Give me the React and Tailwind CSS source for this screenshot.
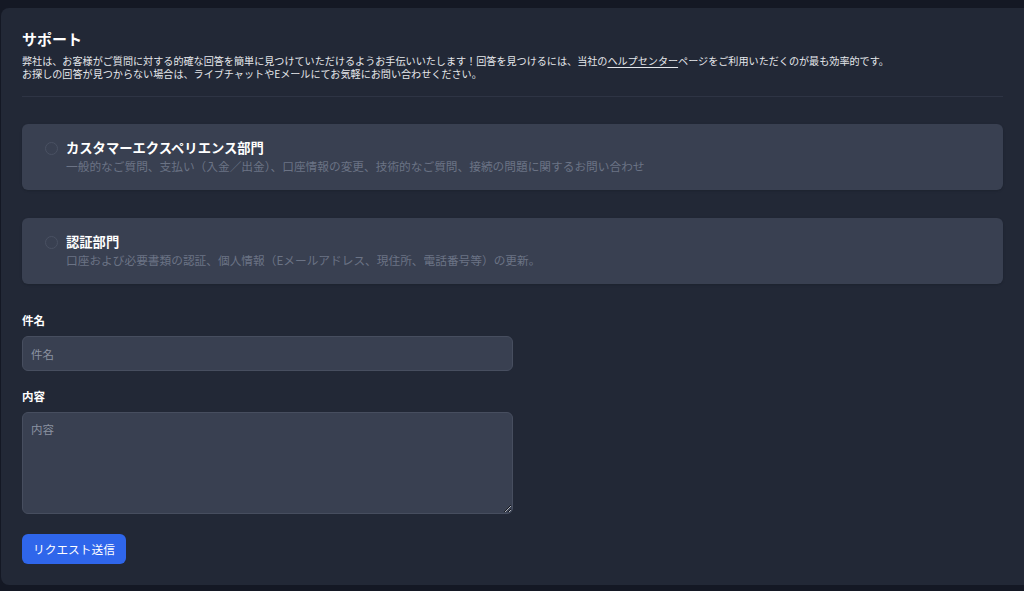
const font = { fontFamily: '"Noto Sans CJK JP", "Noto Sans", sans-serif' };

const departments = [
  {
    title: "カスタマーエクスペリエンス部門",
    desc: "一般的なご質問、支払い（入金／出金）、口座情報の変更、技術的なご質問、接続の問題に関するお問い合わせ",
  },
  {
    title: "認証部門",
    desc: "口座および必要書類の認証、個人情報（Eメールアドレス、現住所、電話番号等）の更新。",
  },
];

const DepartmentOption = ({ title, desc }) => (
  <label className="flex h-[66px] items-start gap-[8px] rounded-md bg-[#394051] pl-[23px] pt-[15px] shadow-sm">
    <input
      type="radio"
      name="department"
      className="mt-[3px] h-[13px] w-[13px] shrink-0 appearance-none rounded-full border border-[#4a5163] bg-[#394051]"
    />
    <div className="flex flex-col">
      <span className="text-[13.3px] font-bold leading-[18px] text-white">{title}</span>
      <span className="mt-[1px] text-[11.7px] leading-[16px] text-[#6b7385]">{desc}</span>
    </div>
  </label>
);

export default function App() {
  return (
    <div className="h-[591px] overflow-hidden bg-[#141824] pl-[1px] pt-[8px]" style={font}>
      <div className="h-[577px] w-[1040px] rounded-l-lg bg-[#222836] pl-[21px] pr-[38px] pt-[21px]">
        <h1 className="text-[15px] font-bold leading-[20px] text-white">サポート</h1>
        <p className="mt-[5px] text-[10.1px] leading-[13px] text-[#e5e7eb]">
          弊社は、お客様がご質問に対する的確な回答を簡単に見つけていただけるようお手伝いいたします！回答を見つけるには、当社の
          <a href="#" className="underline underline-offset-2">ヘルプセンター</a>
          ページをご利用いただくのが最も効率的です。
          <br />
          お探しの回答が見つからない場合は、ライブチャットやEメールにてお気軽にお問い合わせください。
        </p>
        <div className="mt-[16px] border-t border-[#2e3444]" />

        <div className="mt-[27px] flex flex-col gap-[28px]">
          {departments.map((d) => (
            <DepartmentOption key={d.title} {...d} />
          ))}
        </div>

        <div className="mt-[28px] w-[491px]">
          <label className="block text-[11.5px] font-bold leading-[16px] text-white">件名</label>
          <input
            type="text"
            placeholder="件名"
            className="mt-[8px] h-[35px] w-full rounded-md border border-[#474e5f] bg-[#394051] px-[8px] text-[11.5px] text-white placeholder:text-[#8b92a1] focus:outline-none"
          />
          <label className="mt-[17px] block text-[11.5px] font-bold leading-[16px] text-white">内容</label>
          <textarea
            placeholder="内容"
            className="mt-[8px] block h-[102px] w-full rounded-md border border-[#474e5f] bg-[#394051] px-[8px] py-[8px] text-[11.5px] text-white placeholder:text-[#8b92a1] focus:outline-none"
          />
          <button className="mt-[20px] h-[30px] rounded-md bg-[#2f66eb] px-[11px] text-[11.7px] text-white">
            リクエスト送信
          </button>
        </div>
      </div>
    </div>
  );
}
